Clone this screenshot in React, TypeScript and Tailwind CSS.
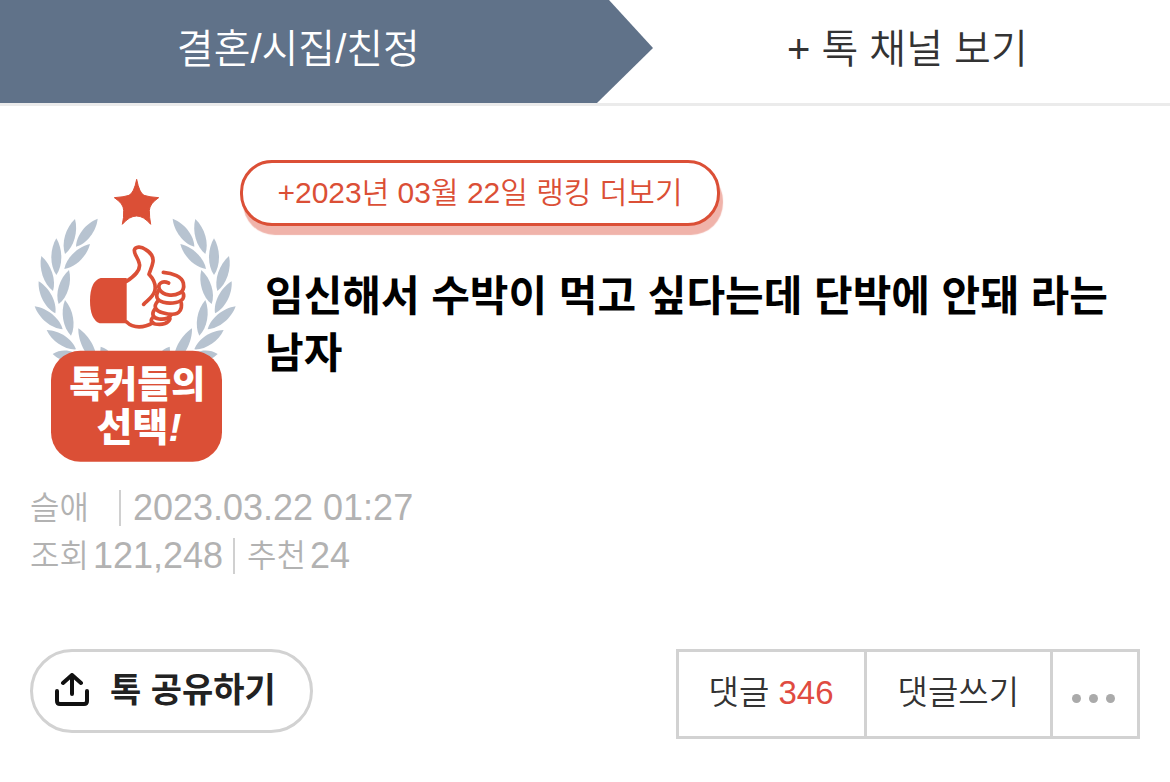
const leaves = [
  [203, 26, 138, 110],
  [135, 27, 105, 132],
  [180, 102, 103, 177],
  [79, 85, 79, 195],
  [117, 180, 86, 282],
  [34, 138, 69, 243],
  [26, 214, 76, 310],
  [105, 270, 123, 377],
  [14, 289, 98, 358],
  [50, 360, 138, 418],
  [145, 355, 200, 460],
  [68, 432, 150, 442],
  [212, 410, 250, 470],
];

// Each leaf is widest near the middle and pointed at both ends.
function leafPath([x1, y1, x2, y2]: number[]) {
  const dx = x2 - x1;
  const dy = y2 - y1;
  const length = Math.hypot(dx, dy);
  const nx = (-dy / length) * 20;
  const ny = (dx / length) * 20;
  const ax = x1 + dx * 0.3;
  const ay = y1 + dy * 0.3;
  const bx = x1 + dx * 0.75;
  const by = y1 + dy * 0.75;
  return (
    `M${x1} ${y1}C${ax + nx} ${ay + ny} ${bx + nx} ${by + ny} ${x2} ${y2}` +
    `C${bx - nx} ${by - ny} ${ax - nx} ${ay - ny} ${x1} ${y1}Z`
  );
}

function Laurel() {
  return (
    <g fill="#b7c3d0">
      {leaves.map((leaf) => (
        <path key={leaf.join()} d={leafPath(leaf)} />
      ))}
    </g>
  );
}

function Emblem() {
  return (
    <svg className="mt-[18px] w-[210px] h-[285px] shrink-0" viewBox="30 39 630 855" role="img" aria-label="톡커들의 선택!">
      <g transform="translate(30 135)">
        <Laurel />
      </g>
      <g transform="translate(661 135) scale(-1 1)">
        <Laurel />
      </g>
      <path
        fill="#db4f36"
        stroke="#db4f36"
        strokeWidth="3"
        strokeLinejoin="round"
        d="M350 43Q358 84 372 91Q386 96 416 98Q389 116 388 136Q388 158 392 178Q350 128 307 178Q312 158 311 136Q311 116 283 98Q313 96 327 91Q342 84 350 43Z"
      />
      <g transform="translate(195 225)">
        <path fill="#db4f36" d="M125 114H47Q15 124 15 182Q15 238 44 250H125Z" />
        <g fill="none" stroke="#db4f36" strokeWidth="11" strokeLinecap="round" strokeLinejoin="round">
          <path d="M125 124C148 108 168 91 163 71C159 52 147 44 148 30C151 20 168 18 181 28C196 37 206 50 204 65C202 78 196 90 192 103C206 118 214 136 209 154C204 171 189 180 176 193" />
          <path d="M125 246C145 266 178 264 204 248" />
          <path d="M235 97C264 99 291 111 295 129C298 143 294 154 284 159C263 170 235 166 224 149C216 132 230 120 251 129" />
          <path d="M220 152C210 170 216 182 235 187C260 193 291 187 295 173C298 166 295 160 291 155" />
          <path d="M218 184C203 201 213 213 233 218C257 225 278 224 285 212C290 204 290 196 289 189" />
          <path d="M209 208C198 224 205 234 222 237C238 239 252 235 258 225" />
          <path d="M204 232C195 240 198 249 211 252C233 256 251 249 255 236" />
        </g>
      </g>
      <rect x="93" y="557" width="513" height="333" rx="88" fill="#db4f36" />
      <g fill="#fff" fontWeight="900" textAnchor="middle">
        <text x="352" y="698" fontSize="111">
          톡커들의
        </text>
        <text x="357" y="828" fontSize="117">
          선택<tspan fontStyle="italic">!</tspan>
        </text>
      </g>
    </svg>
  );
}

function ShareIcon() {
  return (
    <svg
      className="size-9"
      viewBox="0 0 36 36"
      fill="none"
      stroke="#111"
      strokeWidth="4"
      strokeLinecap="round"
      strokeLinejoin="round"
      aria-hidden="true"
    >
      <path d="M18 21V2M9 10l9-8 9 8M3 18v10q0 3 3 3h24q3 0 3-3V18" />
    </svg>
  );
}

function ChannelNav() {
  return (
    <nav className="flex h-[106px] border-b-[3px] border-[#ebebeb] text-[40px] font-[350]">
      <a href="#category" className="flex w-[51%] items-center justify-center bg-[#607289] pb-1.5 text-white">
        결혼/시집/친정
      </a>
      <svg className="h-full w-14 shrink-0" viewBox="0 0 56 103" preserveAspectRatio="none" aria-hidden="true">
        <path fill="#607289" d="M0 0H12L56 48L0 103Z" />
      </svg>
      <a href="#channels" className="flex flex-1 items-center justify-center pr-2 pb-1.5 text-[#333]">
        + 톡 채널 보기
      </a>
    </nav>
  );
}

function Divider() {
  return <span className="mr-3 ml-2.5 h-9 w-0.5 bg-[#d0d0d0]" />;
}

function PostMeta() {
  return (
    <div className="mt-[21px] text-[36px] leading-[48px] font-[350] text-[#b2b2b2]">
      <div className="flex items-center">
        <span className="mr-5 text-[32px]">슬애</span>
        <Divider />
        <time>2023.03.22 01:27</time>
      </div>
      <div className="flex items-center">
        <span className="mr-1 text-[32px]">조회</span>
        <span>121,248</span>
        <Divider />
        <span className="mr-1 text-[32px]">추천</span>
        <span>24</span>
      </div>
    </div>
  );
}

function PostActions() {
  return (
    <div className="mt-[69px] flex items-start justify-between text-[33px]">
      <button className="flex h-[84px] items-center gap-5 rounded-full border-[3px] border-[#d2d2d2] pr-[34px] pl-[21px] font-bold text-[#222]">
        <ShareIcon />
        <span className="pb-0.5 text-[34px]">톡 공유하기</span>
      </button>
      <div className="flex h-[90px] divide-x-[3px] divide-[#d2d2d2] border-[3px] border-[#d2d2d2] font-[350] text-[#333]">
        <a href="#comments" className="flex items-center px-[30px] pb-0.5 whitespace-pre">
          댓글 <span className="font-normal text-[#e04b41]">346</span>
        </a>
        <a href="#write" className="flex items-center px-[31px] pb-0.5">
          댓글쓰기
        </a>
        <button className="flex w-[84px] items-center justify-center gap-2 pt-2 pr-1" aria-label="더보기">
          <span className="size-[9px] rounded-full bg-[#aaa]" />
          <span className="size-[9px] rounded-full bg-[#aaa]" />
          <span className="size-[9px] rounded-full bg-[#aaa]" />
        </button>
      </div>
    </div>
  );
}

export default function App() {
  return (
    <div className="bg-white font-['Liberation_Sans','Noto_Sans_CJK_KR',sans-serif]" lang="ko">
      <ChannelNav />
      <main className="px-[30px] pt-[54px] pb-10">
        <div className="flex">
          <Emblem />
          <div className="flex-1">
            <a
              href="#ranking"
              className="flex h-[66px] w-[480px] items-center justify-center rounded-[32px] border-[3px] border-[#db4f36] bg-white pb-0.5 text-[30px] font-[350] text-[#db4f36] shadow-[3px_9px_1px_#f0b3aa]"
            >
              +2023년 03월 22일 랭킹 더보기
            </a>
            <h1 className="mt-[42px] pl-[25px] text-[42px] leading-[57px] font-bold text-black">
              임신해서 수박이 먹고 싶다는데 단박에 안돼 라는 남자
            </h1>
          </div>
        </div>
        <PostMeta />
        <PostActions />
      </main>
    </div>
  );
}
